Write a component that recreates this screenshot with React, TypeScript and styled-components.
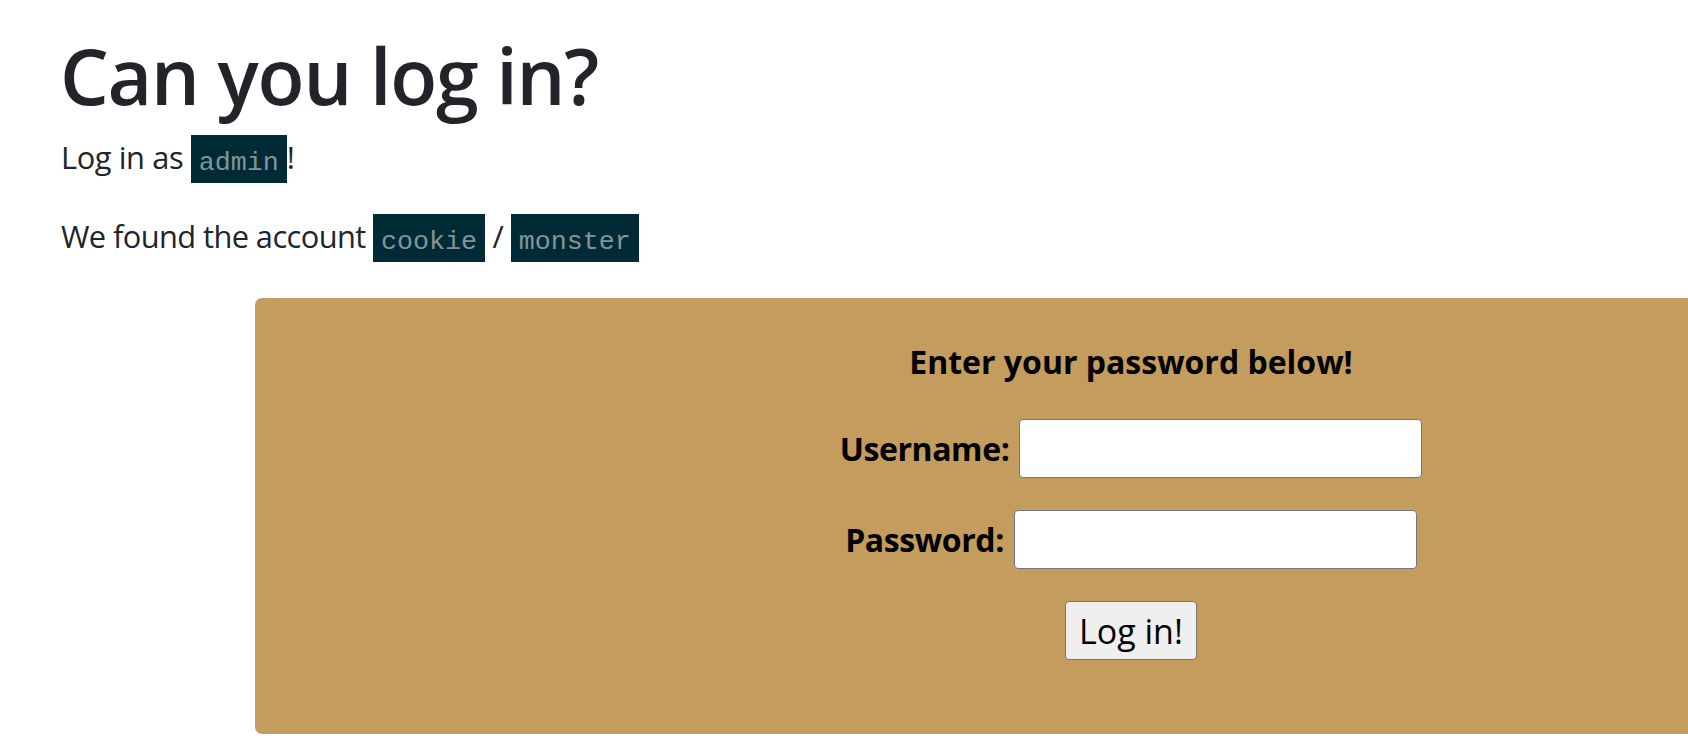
import React from "react";
import styled, { createGlobalStyle } from "styled-components";

const GlobalStyle = createGlobalStyle`
  html, body {
    margin: 0;
    padding: 0;
    overflow: hidden;
    background: #ffffff;
  }
  body {
    font-family: "Open Sans", "Noto Sans", sans-serif;
    color: #212529;
  }
`;

const Page = styled.main`
  display: flex;
  flex-direction: column;
  align-items: flex-start;
  padding: 30px 0 0 60px;
`;

const Title = styled.h1`
  margin: 0 0 12px;
  font-size: 77px;
  font-weight: 600;
  line-height: 1.2;
  letter-spacing: -1.2px;
  color: #212529;
`;

const Text = styled.p<{ $tracking: number }>`
  margin: 0 0 31px;
  padding-left: 1px;
  font-size: 30.8px;
  line-height: 1.5;
  letter-spacing: ${(p) => p.$tracking}px;
  color: #212529;
`;

const Code = styled.code`
  font-family: "Liberation Mono", monospace;
  font-size: 26.67px;
  letter-spacing: 0;
  background: #002b36;
  color: #839496;
  padding: 12.5px 8px 6px;
`;

const Panel = styled.section`
  box-sizing: border-box;
  width: 1752px;
  margin: 6px 0 0 195px;
  padding: 38px 0 74px;
  background: #c49c5e;
  border-radius: 7px;
  display: flex;
  flex-direction: column;
  align-items: center;
  gap: 32px;
`;

const PanelTitle = styled.h2`
  margin: 0;
  font-size: 32px;
  font-weight: 700;
  line-height: 51px;
  color: #000;
`;

const Field = styled.div`
  display: flex;
  align-items: center;
  gap: 10px;
`;

const Label = styled.label`
  font-size: 32px;
  font-weight: 700;
  letter-spacing: -0.4px;
  color: #000;
`;

const Input = styled.input`
  box-sizing: border-box;
  width: 403px;
  height: 59px;
  border: 1px solid #767676;
  border-radius: 4px;
  background: #fff;
  font-size: 30px;
`;

const Button = styled.button`
  box-sizing: border-box;
  height: 59px;
  padding: 0 13px;
  font-family: "Open Sans", "Noto Sans", sans-serif;
  font-size: 34px;
  color: #000;
  background: #efefef;
  border: 1px solid #767676;
  border-radius: 4px;
`;

export default function App() {
  return (
    <>
      <GlobalStyle />
      <Page>
        <Title>Can you log in?</Title>
        <Text $tracking={-0.4}>
          Log in as <Code>admin</Code>!
        </Text>
        <Text $tracking={-0.58}>
          We found the account <Code>cookie</Code> / <Code>monster</Code>
        </Text>
        <Panel>
          <PanelTitle>Enter your password below!</PanelTitle>
          <Field>
            <Label htmlFor="username">Username:</Label>
            <Input id="username" type="text" />
          </Field>
          <Field>
            <Label htmlFor="password">Password:</Label>
            <Input id="password" type="password" />
          </Field>
          <Button type="button">Log in!</Button>
        </Panel>
      </Page>
    </>
  );
}
